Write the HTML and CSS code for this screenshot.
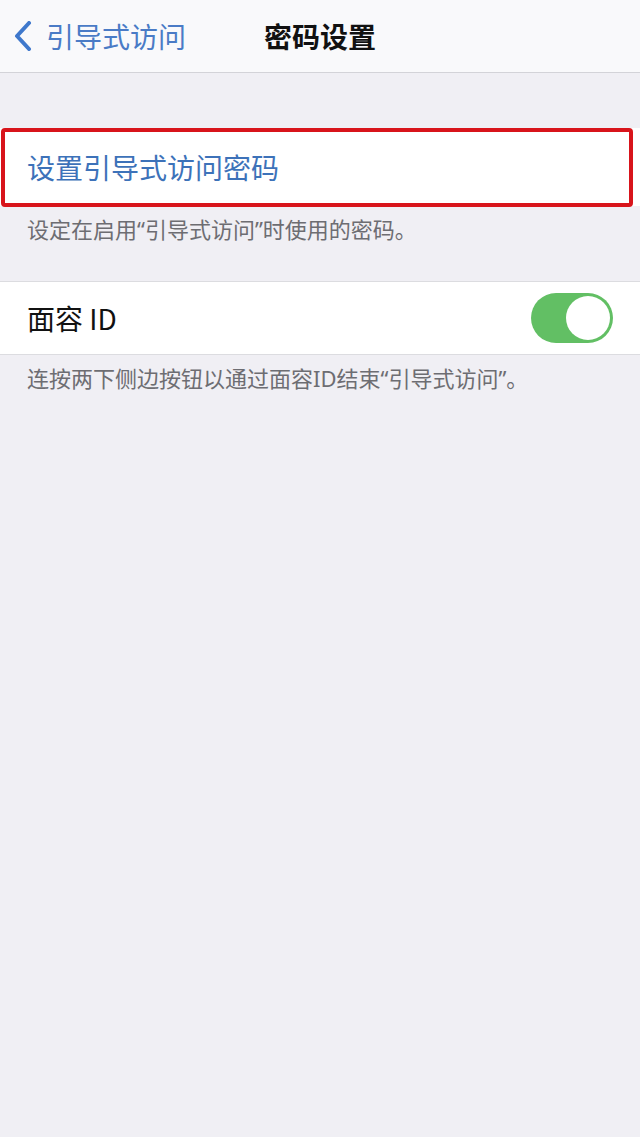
FILE: index.html
```html
<!DOCTYPE html>
<html lang="zh-CN">
<head>
  <meta charset="UTF-8">
  <meta name="viewport" content="width=device-width, initial-scale=1.0">
  <link rel="stylesheet" href="styles.css">
  <title>密码设置</title>
</head>
<body>
  <div class="nav-bar">
    <a class="back-link" href="#">
      <svg class="back-chevron" width="20" height="30" viewBox="0 0 20 30">
        <polyline points="16,2 4,15 16,28" fill="none" stroke="#3f78cc" stroke-width="4" stroke-linecap="round" stroke-linejoin="round"/>
      </svg>
      <span>引导式访问</span>
    </a>
    <div class="nav-title">密码设置</div>
  </div>

  <div class="group group-first">
    <div class="row row-link highlighted">设置引导式访问密码</div>
  </div>
  <div class="group-footer footer-first">设定在启用“引导式访问”时使用的密码。</div>

  <div class="group group-bordered">
    <div class="row">
      <span>面容 ID</span>
      <span class="toggle on"><span class="knob"></span></span>
    </div>
  </div>
  <div class="group-footer">连按两下侧边按钮以通过面容ID结束“引导式访问”。</div>
</body>
</html>
```

FILE: styles.css
```css
body {
  margin: 0;
  background-color: #f0eff4;
  font-family: "Noto Sans CJK SC", "Noto Sans", sans-serif;
  color: #111;
}

/* Top navigation */
.nav-bar {
  height: 72px;
  background-color: #f9f9fb;
  border-bottom: 1px solid #d3d3d8;
  position: relative;
  display: flex;
  align-items: center;
}

.back-link {
  display: flex;
  align-items: center;
  padding-left: 13px;
  color: #4a7bc6;
  text-decoration: none;
  font-size: 28px;
  line-height: 1;
}

.back-chevron {
  margin-right: 13px;
}

.nav-title {
  position: absolute;
  left: 0;
  right: 0;
  text-align: center;
  font-size: 28px;
  font-weight: 600;
  pointer-events: none;
}

/* Table groups */
.group {
  background-color: #fff;
}

.group-first {
  margin-top: 55px;
}

.group-bordered {
  border-top: 1px solid #dcdce0;
  border-bottom: 1px solid #dcdce0;
}

.row {
  height: 72px;
  padding: 0 27px;
  display: flex;
  align-items: center;
  justify-content: space-between;
  font-size: 28px;
}

.row-link {
  height: 78px;
  color: #3d72b9;
  position: relative;
}

/* Red annotation box drawn over the first row */
.highlighted::after {
  content: "";
  position: absolute;
  left: 1px;
  right: 7px;
  top: 0;
  bottom: -1px;
  border: 4px solid #d8141b;
  border-radius: 4px;
}

/* Latin font first so the quote marks stay narrow */
.group-footer {
  padding: 9px 27px 0;
  font-family: "Noto Sans", "Noto Sans CJK SC", sans-serif;
  font-size: 22px;
  line-height: 28px;
  color: #6d6d72;
}

.footer-first {
  height: 66px;
}

/* Switch */
.toggle {
  width: 82px;
  height: 50px;
  border-radius: 25px;
  background-color: #62bf64;
  position: relative;
}

.toggle .knob {
  position: absolute;
  top: 3px;
  right: 3px;
  width: 44px;
  height: 44px;
  border-radius: 50%;
  background-color: #fff;
}
```
